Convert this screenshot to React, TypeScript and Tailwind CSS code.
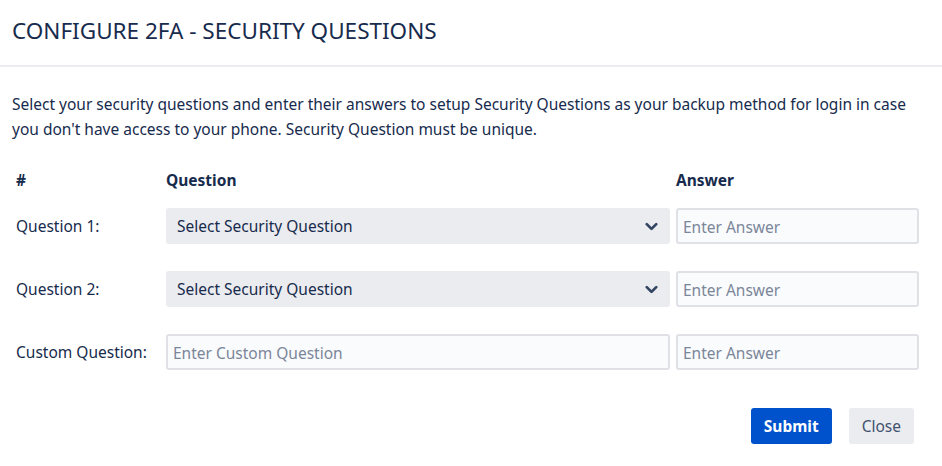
import { ChevronDown } from "lucide-react";

const font = { fontFamily: '"Noto Sans", "Open Sans", sans-serif' };

function SelectBox() {
  return (
    <div className="h-[36px] w-full rounded-[3px] bg-[#ebecf0] flex items-center justify-between pl-[11px] pr-[9px] text-[15.5px] text-[#172b4d]">
      <span className="pt-[2px]">Select Security Question</span>
      <ChevronDown className="w-[19px] h-[19px] text-[#344563]" strokeWidth={3.5} />
    </div>
  );
}

function TextInput({ placeholder }: { placeholder: string }) {
  return (
    <input
      placeholder={placeholder}
      className="h-[36px] w-full rounded-[3px] border-2 border-[#dfe1e6] bg-[#fafbfc] px-[5px] pt-[2px] text-[15.5px] text-[#172b4d] placeholder:text-[#7a869a] outline-none"
    />
  );
}

export default function App() {
  const rows = [
    { label: "Question 1:", select: true },
    { label: "Question 2:", select: true },
    { label: "Custom Question:", select: false },
  ];

  return (
    <div className="w-[942px] h-[466px] bg-white text-[#172b4d]" style={font}>
      {/* Header */}
      <header className="h-[67px] border-b-2 border-[#ebecf0] flex items-center px-3">
        <h1 className="text-[22.5px] text-[#172b4d] pb-[4px]">CONFIGURE 2FA - SECURITY QUESTIONS</h1>
      </header>

      <div className="px-3 pt-[25px]">
        <p className="text-[15.5px] leading-[25px] text-[#172b4d]">
          Select your security questions and enter their answers to setup Security Questions as your backup method for login in case you don't have access to your phone. Security Question must be unique.
        </p>

        <div className="mt-[24px] px-1">
          <div className="grid grid-cols-[144px_504px_243px] gap-x-[6px] h-[30px] items-center font-bold text-[15.5px]">
            <span>#</span>
            <span>Question</span>
            <span>Answer</span>
          </div>

          <div className="mt-[12px] flex flex-col gap-[27px]">
            {rows.map((r) => (
              <div key={r.label} className="grid grid-cols-[144px_504px_243px] gap-x-[6px] items-center text-[15.5px]">
                <span className="pt-[1px]">{r.label}</span>
                {r.select ? <SelectBox /> : <TextInput placeholder="Enter Custom Question" />}
                <TextInput placeholder="Enter Answer" />
              </div>
            ))}
          </div>
        </div>

        <div className="mt-[38px] flex justify-end gap-[17px] pr-[16px]">
          <button className="h-[36px] px-[13px] pt-[1px] rounded-[3px] bg-[#0052cc] text-white font-bold text-[15.5px]">
            Submit
          </button>
          <button className="h-[36px] px-[13px] pt-[1px] rounded-[3px] bg-[#ebecf0] text-[#42526e] text-[15.5px]">
            Close
          </button>
        </div>
      </div>
    </div>
  );
}
